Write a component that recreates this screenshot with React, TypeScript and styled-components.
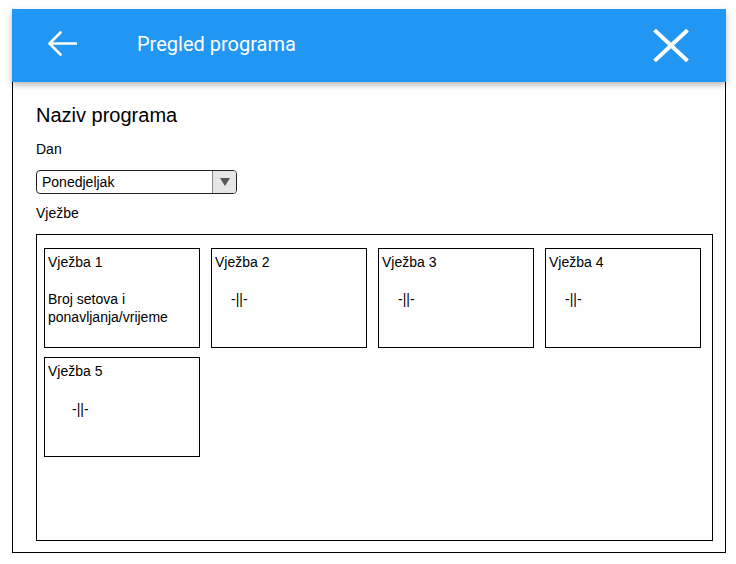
import React from "react";
import styled, { createGlobalStyle } from "styled-components";

const Global = createGlobalStyle`
  html, body { margin: 0; padding: 0; background: #fff; }
  body { font-family: "Liberation Sans", Arial, sans-serif; color: #000; }
  * { box-sizing: border-box; }
`;

const Frame = styled.div`
  margin: 9px 0 0 12px;
  width: 714px;
  display: flex;
  flex-direction: column;
`;

const Header = styled.header`
  position: relative;
  z-index: 1;
  height: 73px;
  background: #2196f3;
  box-shadow: 0 3px 6px rgba(0, 0, 0, 0.28);
  display: flex;
  align-items: center;
  padding: 0 37px 0 35px;
  color: #fff;
`;

const IconButton = styled.button<{ $lift: number }>`
  background: none;
  border: none;
  padding: 0;
  margin: 0 0 ${(p) => p.$lift}px 0;
  display: flex;
  align-items: center;
  justify-content: center;
  color: #fff;
  cursor: pointer;
`;

const Title = styled.h1`
  margin: 0 0 4px 60px;
  flex: 1;
  font-family: Roboto, "Liberation Sans", sans-serif;
  font-weight: 400;
  font-size: 20px;
  line-height: 24px;
  color: #fff;
`;

const Body = styled.main`
  height: 471px;
  border: 1px solid #000;
  border-top: none;
  padding: 22px 0 0 23px;
`;

const ProgramName = styled.h2`
  margin: 0;
  font-size: 20px;
  font-weight: 400;
  line-height: 23px;
`;

const Label = styled.div<{ $gap: number }>`
  margin-top: ${(p) => p.$gap}px;
  font-size: 14px;
  line-height: 16px;
`;

const Select = styled.div`
  margin-top: 13px;
  width: 201px;
  height: 24px;
  border: 1px solid #222;
  border-radius: 4px;
  display: flex;
  overflow: hidden;
`;

const SelectValue = styled.div`
  flex: 1;
  padding-left: 5px;
  font-size: 14px;
  line-height: 22px;
`;

const SelectArrow = styled.div`
  width: 24px;
  background: #e6e6e6;
  border-left: 1px solid #888;
  display: flex;
  align-items: center;
  justify-content: center;
`;

const ExerciseBox = styled.section`
  margin-top: 13px;
  width: 677px;
  height: 307px;
  border: 1px solid #000;
  padding: 13px 7px;
  display: flex;
  flex-wrap: wrap;
  align-content: flex-start;
  gap: 9px 11px;
`;

const Card = styled.div`
  width: 156px;
  height: 100px;
  border: 1px solid #000;
  padding: 5px 3px 4px;
  font-size: 14px;
  line-height: 16px;
`;

const CardTitle = styled.div`
  line-height: 16px;
`;

const CardInfo = styled.div<{ $indent: number; $top: number }>`
  margin-top: ${(p) => p.$top}px;
  padding-left: ${(p) => p.$indent}px;
  line-height: 18px;
`;

const BackIcon = () => (
  <svg width="30" height="25" viewBox="0 0 30 25" fill="none">
    <path
      d="M29 12.5H2.5M13.5 1.5L2.5 12.5L13.5 23.5"
      stroke="#fff"
      strokeWidth="2.6"
      strokeLinecap="round"
      strokeLinejoin="round"
    />
  </svg>
);

const CloseIcon = () => (
  <svg width="36" height="33" viewBox="0 0 36 33" fill="none">
    <path
      d="M3 2.5L33 30.5M33 2.5L3 30.5"
      stroke="#fff"
      strokeWidth="4"
      strokeLinecap="square"
    />
  </svg>
);

const exercises = [
  { name: "Vježba 1", info: "Broj setova i ponavljanja/vrijeme", indent: 0, top: 20 },
  { name: "Vježba 2", info: "-||-", indent: 16, top: 20 },
  { name: "Vježba 3", info: "-||-", indent: 16, top: 20 },
  { name: "Vježba 4", info: "-||-", indent: 16, top: 20 },
  { name: "Vježba 5", info: "-||-", indent: 24, top: 21 },
];

export default function App() {
  return (
    <>
      <Global />
      <Frame>
        <Header>
          <IconButton $lift={5} aria-label="Natrag">
            <BackIcon />
          </IconButton>
          <Title>Pregled programa</Title>
          <IconButton $lift={0} aria-label="Zatvori">
            <CloseIcon />
          </IconButton>
        </Header>
        <Body>
          <ProgramName>Naziv programa</ProgramName>
          <Label $gap={14}>Dan</Label>
          <Select>
            <SelectValue>Ponedjeljak</SelectValue>
            <SelectArrow>
              <svg width="10" height="8" viewBox="0 0 10 8">
                <path d="M0 0H10L5 8Z" fill="#555" />
              </svg>
            </SelectArrow>
          </Select>
          <Label $gap={11}>Vježbe</Label>
          <ExerciseBox>
            {exercises.map((e) => (
              <Card key={e.name}>
                <CardTitle>{e.name}</CardTitle>
                <CardInfo $indent={e.indent} $top={e.top}>
                  {e.info}
                </CardInfo>
              </Card>
            ))}
          </ExerciseBox>
        </Body>
      </Frame>
    </>
  );
}
